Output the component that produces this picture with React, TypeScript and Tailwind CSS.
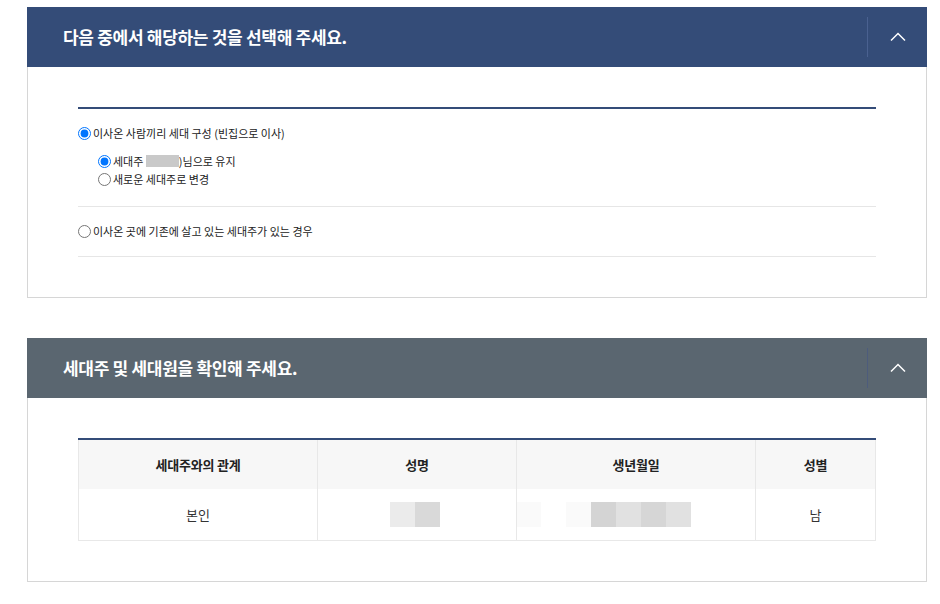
import { useState } from 'react';

// ── Section panel ────────────────────────────────────────────

interface PanelProps {
  title: string;
  tone: 'navy' | 'slate';
  children: React.ReactNode;
}

function Chevron() {
  return (
    <svg width="16" height="10" viewBox="0 0 16 10" fill="none">
      <path d="M1 8.5 L8 1.5 L15 8.5" stroke="#ffffff" strokeWidth="1.5" />
    </svg>
  );
}

function Panel({ title, tone, children }: PanelProps) {
  const [open, setOpen] = useState(true);
  const head = tone === 'navy' ? 'bg-[#344c78]' : 'bg-[#5a6670]';
  const line = tone === 'navy' ? 'bg-[#4a6190]' : 'bg-[#4d5c7c]';

  return (
    <section className="w-[900px]">
      <div className={`flex h-[60px] items-center ${head}`}>
        <h2 className="flex-1 pl-[36px] text-[17px] font-bold tracking-[-0.3px] text-white">{title}</h2>
        <div className={`h-[40px] w-px ${line}`} />
        <button
          onClick={() => setOpen((v) => !v)}
          className="flex h-full w-[59px] items-center justify-center"
        >
          <Chevron />
        </button>
      </div>
      {open && (
        <div className="border-x border-b border-[#d6d6d6] bg-white px-[50px] pt-[40px] pb-[40px]">
          {children}
        </div>
      )}
    </section>
  );
}

// ── Radio row ────────────────────────────────────────────────

function Radio({ name, checked, children }: { name: string; checked?: boolean; children: React.ReactNode }) {
  return (
    <label className="flex h-[18px] items-center gap-[2px] text-[11px] text-[#222]">
      <input type="radio" name={name} defaultChecked={checked} className="m-0 h-[13px] w-[13px]" />
      <span>{children}</span>
    </label>
  );
}

// ── Main page ────────────────────────────────────────────────

export default function App() {
  return (
    <div className="min-h-[604px] bg-white pt-[7px] pl-[27px] font-['Noto_Sans_CJK_KR','Noto_Sans',sans-serif]">
      <Panel title="다음 중에서 해당하는 것을 선택해 주세요." tone="navy">
        <div className="border-t-2 border-[#344c78]">
          {/* Option 1 */}
          <div className="border-b border-[#e6e6e6] pt-[15px] pb-[18px]">
            <Radio name="mode" checked>
              이사온 사람끼리 세대 구성 (빈집으로 이사)
            </Radio>
            <div className="mt-[10px] pl-[20px]">
              <Radio name="head" checked>
                세대주 <span className="inline-block h-[12px] w-[33px] translate-y-[1px] bg-[#c9c9c9]" />)님으로 유지
              </Radio>
              <Radio name="head">새로운 세대주로 변경</Radio>
            </div>
          </div>

          {/* Option 2 */}
          <div className="border-b border-[#e6e6e6] pt-[15px] pb-[16px]">
            <Radio name="mode">이사온 곳에 기존에 살고 있는 세대주가 있는 경우</Radio>
          </div>
        </div>
      </Panel>

      <div className="h-[40px]" />

      <Panel title="세대주 및 세대원을 확인해 주세요." tone="slate">
        <div className="border-t-2 border-[#344c78]">
          <div className="grid grid-cols-[238px_199px_239px_1fr] border-x border-b border-[#e8e8e8] text-[13px] text-[#333]">
            {['세대주와의 관계', '성명', '생년월일', '성별'].map((h, i) => (
              <div
                key={h}
                className={`flex h-[49px] items-center justify-center bg-[#f7f7f7] font-bold tracking-[-0.2px] text-[#222] ${i > 0 ? 'border-l border-[#e8e8e8]' : ''}`}
              >
                {h}
              </div>
            ))}

            <div className="flex h-[51px] items-center justify-center">본인</div>
            <div className="flex h-[51px] items-center justify-center border-l border-[#e8e8e8] pr-[5px]">
              <span className="h-[25px] w-[25px] bg-[#ebebeb]" />
              <span className="h-[25px] w-[25px] bg-[#d9d9d9]" />
            </div>
            <div className="flex h-[51px] items-center border-l border-[#e8e8e8]">
              <span className="h-[25px] w-[24px] bg-[#fafafa]" />
              <span className="ml-[25px] h-[25px] w-[25px] bg-[#fafafa]" />
              <span className="h-[25px] w-[25px] bg-[#d4d4d4]" />
              <span className="h-[25px] w-[25px] bg-[#e1e1e1]" />
              <span className="h-[25px] w-[25px] bg-[#d6d6d6]" />
              <span className="h-[25px] w-[25px] bg-[#e1e1e1]" />
            </div>
            <div className="flex h-[51px] items-center justify-center border-l border-[#e8e8e8]">남</div>
          </div>
        </div>
      </Panel>
    </div>
  );
}
